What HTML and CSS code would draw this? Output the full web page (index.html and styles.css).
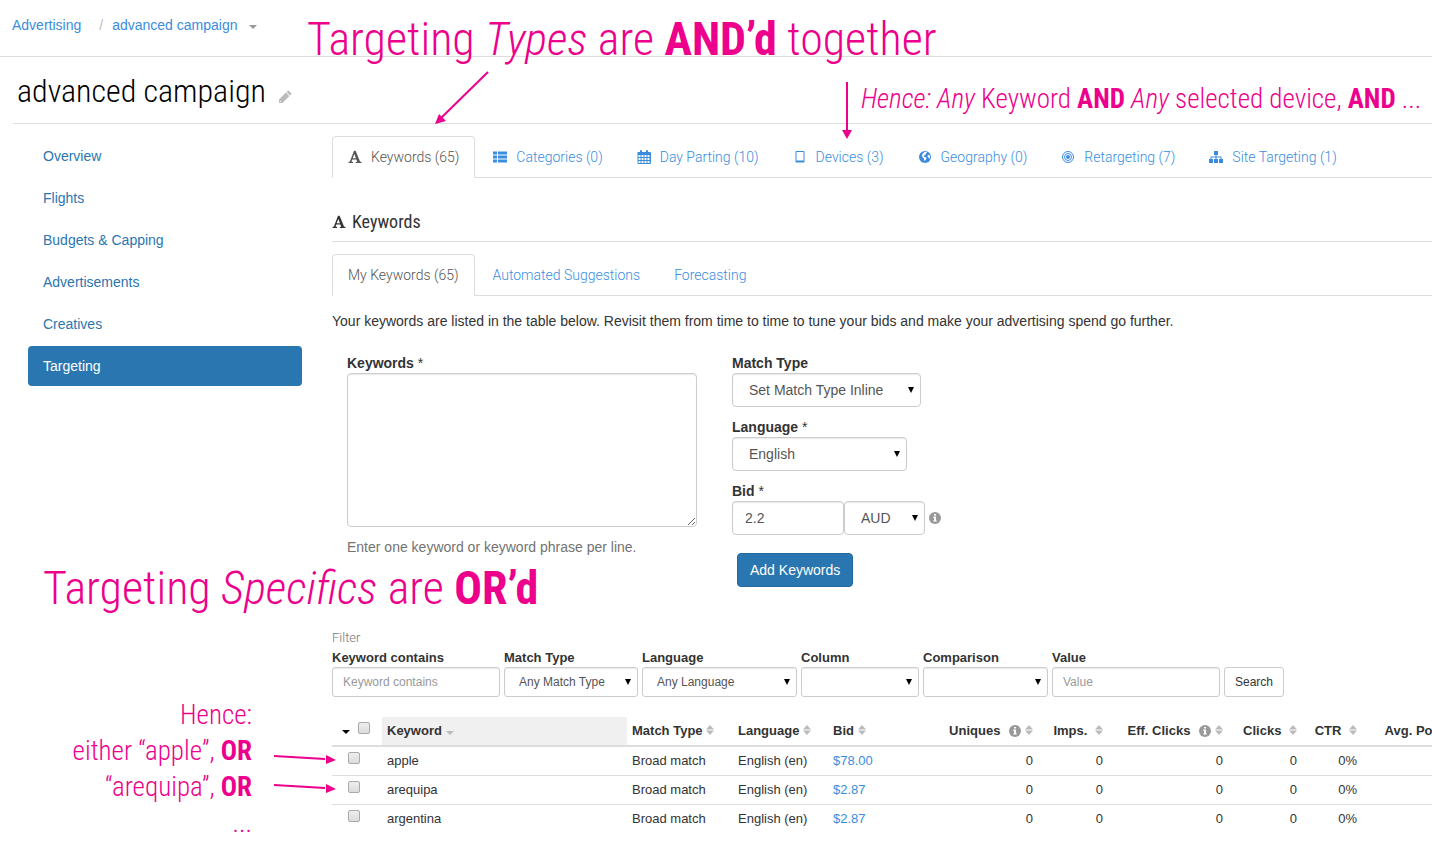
FILE: index.html
```html
<!DOCTYPE html>
<html lang="en">
<head>
  <meta charset="UTF-8">
  <meta name="viewport" content="width=device-width, initial-scale=1.0">
  <title>advanced campaign</title>
  <link rel="stylesheet" href="styles.css">
</head>
<body>
  <!-- shared icons -->
  <svg class="sprite" width="0" height="0" aria-hidden="true">
    <symbol id="icon-font" viewBox="0 0 14 14">
      <path d="M6 .8h1.600L12 11.600l1.500.5v.9H7.800v-.9l1.400-.4-.8-2.300H4.300l-.8 2.200 1.600.5v.9H.5v-.9l1.400-.5zM6.300 4L4.700 8.300H8z"/>
    </symbol>
    <symbol id="icon-list" viewBox="0 0 14 14">
      <path d="M0 1.500h4v3H0zM5 1.500h9v3H5zM0 5.500h4v3H0zM5 5.500h9v3H5zM0 9.500h4v3H0zM5 9.500h9v3H5z"/>
    </symbol>
    <symbol id="icon-calendar" viewBox="0 0 14 14">
      <path fill-rule="evenodd" d="M1 2h2V1q0-1 1-1t1 1v1h4V1q0-1 1-1t1 1v1h2q1 0 1 1v10q0 1-1 1H1.500q-1 0-1-1V3q0-1 .5-1zM1.500 5v2h2V5zM4.500 5v2h2V5zM7.500 5v2h2V5zM10.500 5v2h2V5zM1.500 8v2h2V8zM4.500 8v2h2V8zM7.500 8v2h2V8zM10.500 8v2h2V8zM1.500 11v2h2v-2zM4.500 11v2h2v-2zM7.500 11v2h2v-2zM10.500 11v2h2v-2z"/>
    </symbol>
    <symbol id="icon-tablet" viewBox="0 0 14 14">
      <path fill-rule="evenodd" d="M3.500 1h7q1 0 1 1v9.500q0 1-1 1h-7q-1 0-1-1V2q0-1 1-1zM3.500 2v8.500h7V2z"/>
    </symbol>
    <symbol id="icon-globe" viewBox="0 0 14 14">
      <circle cx="7" cy="7" r="6"/>
      <path fill="#fff" d="M6.500 2l1.800-.2.8.9-1.400.8.2 1-1.500.7-.9 1.200 1.500.5 1.600 1-.5 1.400-1.200 1.400-.7-.3-.3-2-1.400-1.200-.6-1.700.5-1.500zM9.800 5.200l1.600-.4.7 1.500-.2 2-.8.5-.6-1.400-1-.6z"/>
    </symbol>
    <symbol id="icon-target" viewBox="0 0 14 14">
      <g fill="none" stroke="currentColor"><circle cx="7" cy="7" r="5.500"/><circle cx="7" cy="7" r="3.500"/></g>
      <circle cx="7" cy="7" r="2"/>
    </symbol>
    <symbol id="icon-sitemap" viewBox="0 0 14 14">
      <path d="M5 1h4v4H7.500v1.500H12q.5 0 .5.500v2H14v4h-4V9h1.500V7.500h-4V9H9v4H5V9h1.500V7.500h-4V9H4v4H0V9h1.500V7q0-.5.500-.5h4.500V5H5z"/>
    </symbol>
    <symbol id="icon-pencil" viewBox="0 0 14 14">
      <path fill-rule="evenodd" d="M1 9.500l6.900-6.900 3.500 3.500L4.500 13H1zM1.900 10.600v1.500h1.500zM8.600 1.900l1-1q.7-.6 1.400 0l2.100 2.100q.6.700 0 1.400l-1 1z"/>
    </symbol>
    <symbol id="icon-info" viewBox="0 0 12 12">
      <circle cx="6" cy="6" r="6"/>
      <path fill="#fff" d="M5 2h2v1.600H5zM4.200 4.600H7v3.800h.8v1.200H4.200V8.400H5V5.800h-.8z"/>
    </symbol>
    <symbol id="icon-sort" viewBox="0 0 8 10">
      <path d="M0 4.400L4 0l4 4.400zM0 5.600h8L4 10z"/>
    </symbol>
  </svg>

  <header class="topbar">
    <nav class="breadcrumb">
      <a href="#">Advertising</a>
      <span class="separator">/</span>
      <a href="#">advanced campaign</a>
      <span class="caret"></span>
    </nav>
  </header>

  <div class="title-row">
    <h1>advanced campaign</h1>
    <svg class="icon icon-edit"><use href="#icon-pencil"/></svg>
  </div>

  <div class="layout">
    <nav class="sidebar">
      <a href="#">Overview</a>
      <a href="#">Flights</a>
      <a href="#">Budgets &amp; Capping</a>
      <a href="#">Advertisements</a>
      <a href="#">Creatives</a>
      <a href="#" class="active">Targeting</a>
    </nav>

    <main class="content">
      <nav class="tabs">
        <a href="#" class="active"><svg class="icon"><use href="#icon-font"/></svg>Keywords (65)</a>
        <a href="#"><svg class="icon"><use href="#icon-list"/></svg>Categories (0)</a>
        <a href="#"><svg class="icon"><use href="#icon-calendar"/></svg>Day Parting (10)</a>
        <a href="#"><svg class="icon"><use href="#icon-tablet"/></svg>Devices (3)</a>
        <a href="#"><svg class="icon"><use href="#icon-globe"/></svg>Geography (0)</a>
        <a href="#"><svg class="icon"><use href="#icon-target"/></svg>Retargeting (7)</a>
        <a href="#"><svg class="icon"><use href="#icon-sitemap"/></svg>Site Targeting (1)</a>
      </nav>

      <h2><svg class="icon"><use href="#icon-font"/></svg>Keywords</h2>

      <nav class="tabs">
        <a href="#" class="active">My Keywords (65)</a>
        <a href="#">Automated Suggestions</a>
        <a href="#">Forecasting</a>
      </nav>

      <p class="intro">Your keywords are listed in the table below. Revisit them from time to time to tune your bids and make your advertising spend go further.</p>

      <form class="keyword-form">
        <div class="form-left">
          <label for="keywords">Keywords <span class="required">*</span></label>
          <textarea id="keywords"></textarea>
          <p class="help">Enter one keyword or keyword phrase per line.</p>
        </div>
        <div class="form-right">
          <div class="field">
            <label for="match-type">Match Type</label>
            <span class="select w-match"><select id="match-type"><option>Set Match Type Inline</option></select></span>
          </div>
          <div class="field">
            <label for="language">Language <span class="required">*</span></label>
            <span class="select w-language"><select id="language"><option>English</option></select></span>
          </div>
          <div class="field">
            <label for="bid">Bid <span class="required">*</span></label>
            <div class="bid-row">
              <input type="text" id="bid" value="2.2">
              <span class="select w-currency"><select id="currency" aria-label="Currency"><option>AUD</option></select></span>
              <svg class="info"><use href="#icon-info"/></svg>
            </div>
          </div>
          <button type="button" class="btn-primary">Add Keywords</button>
        </div>
      </form>

      <form class="filter">
        <p class="filter-title">Filter</p>
        <div class="filter-row">
          <div>
            <label for="f-keyword">Keyword contains</label>
            <input type="text" id="f-keyword" placeholder="Keyword contains">
          </div>
          <div>
            <label for="f-match">Match Type</label>
            <span class="select w-f-match"><select id="f-match"><option>Any Match Type</option></select></span>
          </div>
          <div>
            <label for="f-language">Language</label>
            <span class="select w-f-language"><select id="f-language"><option>Any Language</option></select></span>
          </div>
          <div>
            <label for="f-column">Column</label>
            <span class="select w-f-column"><select id="f-column"><option></option></select></span>
          </div>
          <div>
            <label for="f-comparison">Comparison</label>
            <span class="select w-f-comparison"><select id="f-comparison"><option></option></select></span>
          </div>
          <div>
            <label for="f-value">Value</label>
            <input type="text" id="f-value" placeholder="Value">
          </div>
          <button type="button" class="btn-search">Search</button>
        </div>
      </form>

      <div class="table-wrap">
        <table>
          <colgroup>
            <col class="c-check"><col class="c-keyword"><col class="c-match"><col class="c-language"><col class="c-bid">
            <col class="c-uniques"><col class="c-imps"><col class="c-eff"><col class="c-clicks"><col class="c-ctr"><col class="c-pos">
          </colgroup>
          <thead>
            <tr>
              <th class="check"><span class="caret"></span><input type="checkbox" aria-label="Select all"></th>
              <th class="sorted">Keyword <span class="caret"></span></th>
              <th>Match Type <svg class="sort"><use href="#icon-sort"/></svg></th>
              <th>Language <svg class="sort"><use href="#icon-sort"/></svg></th>
              <th>Bid <svg class="sort"><use href="#icon-sort"/></svg></th>
              <th class="num">Uniques <svg class="info"><use href="#icon-info"/></svg><svg class="sort"><use href="#icon-sort"/></svg></th>
              <th class="num"><span class="name">Imps.</span> <svg class="sort"><use href="#icon-sort"/></svg></th>
              <th class="num">Eff. Clicks <svg class="info"><use href="#icon-info"/></svg><svg class="sort"><use href="#icon-sort"/></svg></th>
              <th class="num"><span class="name">Clicks</span> <svg class="sort"><use href="#icon-sort"/></svg></th>
              <th class="num"><span class="name">CTR</span> <svg class="sort"><use href="#icon-sort"/></svg></th>
              <th class="num"><span class="name">Avg. Pos.</span> <svg class="sort"><use href="#icon-sort"/></svg></th>
            </tr>
          </thead>
          <tbody>
            <tr>
              <td class="check"><input type="checkbox" aria-label="apple"></td>
              <td>apple</td><td>Broad match</td><td>English (en)</td><td><a href="#">$78.00</a></td>
              <td class="num">0</td><td class="num">0</td><td class="num">0</td><td class="num">0</td><td class="num">0%</td><td></td>
            </tr>
            <tr>
              <td class="check"><input type="checkbox" aria-label="arequipa"></td>
              <td>arequipa</td><td>Broad match</td><td>English (en)</td><td><a href="#">$2.87</a></td>
              <td class="num">0</td><td class="num">0</td><td class="num">0</td><td class="num">0</td><td class="num">0%</td><td></td>
            </tr>
            <tr>
              <td class="check"><input type="checkbox" aria-label="argentina"></td>
              <td>argentina</td><td>Broad match</td><td>English (en)</td><td><a href="#">$2.87</a></td>
              <td class="num">0</td><td class="num">0</td><td class="num">0</td><td class="num">0</td><td class="num">0%</td><td></td>
            </tr>
          </tbody>
        </table>
      </div>
    </main>
  </div>

  <!-- notes drawn over the page -->
  <p class="note note-types">Targeting <i>Types</i> are <b>AND’d</b> together</p>
  <p class="note note-hence"><i>Hence: Any</i> Keyword <b>AND</b> <i>Any</i> selected device, <b>AND</b> ...</p>
  <p class="note note-specifics">Targeting <i>Specifics</i> are <b>OR’d</b></p>
  <p class="note note-either">Hence:<br>either “apple”, <b>OR</b><br>“arequipa”, <b>OR</b><br>...</p>
  <svg class="arrows" width="860" height="800" aria-hidden="true">
    <g stroke="#ec008c" stroke-width="2">
      <path d="M488 72L441 118"/>
      <path d="M847 82V131"/>
      <path d="M274 756L325 759"/>
      <path d="M274 785L325 788"/>
    </g>
    <g fill="#ec008c">
      <path d="M435 124l4-10 7 7z"/>
      <path d="M842 130h10l-5 9z"/>
      <path d="M336 760l-10 4V755z"/>
      <path d="M336 789l-10 4V784z"/>
    </g>
  </svg>
</body>
</html>
```

FILE: styles.css
```css
* {
  box-sizing: border-box;
}

body {
  margin: 0;
  position: relative;
  min-height: 100vh;
  overflow-x: hidden;
  background: #fff;
  color: #333;
  font-family: "Liberation Sans", Arial, sans-serif;
  font-size: 14px;
  line-height: 20px;
}

h1, h2, p {
  margin: 0;
}

a {
  color: #3a8dde;
  text-decoration: none;
}

.sprite {
  display: block;
}

.icon {
  width: 14px;
  height: 14px;
  fill: currentColor;
}

.caret {
  display: inline-block;
  border: 4px solid transparent;
  border-top-color: currentColor;
  border-bottom: 0;
}

/* header */
.topbar {
  height: 57px;
  padding: 15px 12px;
  border-bottom: 1px solid #ddd;
}

.breadcrumb {
  display: flex;
  align-items: center;
}

.breadcrumb .separator {
  padding: 0 9px 0 18px;
  color: #bbb;
}

.breadcrumb .caret {
  margin: 3px 0 0 12px;
  color: #999;
}

.title-row {
  display: flex;
  align-items: center;
  gap: 12px;
  height: 67px;
  margin-left: 13px;
  padding: 2px 4px 0;
  border-bottom: 1px solid #ddd;
}

h1 {
  color: #000;
  font: 300 32px/40px "Roboto Condensed", Roboto, sans-serif;
}

.icon-edit {
  margin-top: 12px;
  color: #bbb;
}

/* columns */
.layout {
  display: grid;
  grid-template-columns: 274px minmax(0, 1fr);
  gap: 30px;
  padding: 12px 0 0 28px;
}

.sidebar {
  display: flex;
  flex-direction: column;
  gap: 2px;
}

.sidebar a {
  padding: 10px 15px;
  border-radius: 4px;
  color: #2a76b0;
}

.sidebar .active {
  background: #2a76b0;
  color: #fff;
}

/* tabs */
.tabs {
  display: flex;
  gap: 2px;
  height: 42px;
  border-bottom: 1px solid #ddd;
  font-family: Roboto, sans-serif;
  font-weight: 300;
  white-space: nowrap;
}

.tabs a {
  display: flex;
  align-items: center;
  gap: 9px;
  height: 42px;
  padding: 0 15px;
  border: 1px solid transparent;
  border-radius: 4px 4px 0 0;
}

.tabs .active {
  border-color: #ddd;
  border-bottom-color: #fff;
  background: #fff;
  color: #555;
}

h2 {
  display: flex;
  align-items: center;
  gap: 6px;
  margin: 32px 0 12px;
  padding-bottom: 7px;
  border-bottom: 1px solid #ddd;
  font: 400 18px/24px "Roboto Condensed", Roboto, sans-serif;
}

.intro {
  margin-top: 15px;
}

/* forms */
label {
  display: block;
  font-weight: bold;
}

.required {
  font-weight: normal;
}

input[type="text"],
textarea,
select {
  display: block;
  width: 100%;
  height: 34px;
  margin: 0;
  padding: 6px 12px;
  border: 1px solid #ccc;
  border-radius: 4px;
  background: #fff;
  box-shadow: inset 0 1px 1px rgba(0, 0, 0, .08);
  color: #555;
  font: inherit;
}

::placeholder {
  color: #999;
  opacity: 1;
}

select {
  padding: 0 16px;
  appearance: none;
}

.select {
  position: relative;
  display: block;
}

.select::after {
  content: "";
  position: absolute;
  top: 50%;
  right: 7px;
  margin-top: -3px;
  border: 3px solid transparent;
  border-top: 6px solid #000;
  border-bottom: 0;
  pointer-events: none;
}

.keyword-form {
  display: flex;
  gap: 35px;
  margin: 22px 15px 0;
}

.form-left {
  width: 350px;
}

.keyword-form textarea {
  height: 154px;
}

.help {
  margin-top: 10px;
  color: #737373;
}

.field {
  margin-bottom: 10px;
}

.w-match { width: 189px; }
.w-language { width: 175px; }
.w-currency { width: 81px; }

.bid-row {
  display: flex;
  align-items: center;
}

.bid-row input[type="text"] {
  width: 112px;
}

.info {
  width: 12px;
  height: 12px;
  fill: #999;
}

.bid-row .info {
  margin-left: 4px;
}

button {
  border-radius: 4px;
  font: inherit;
}

.btn-primary {
  height: 34px;
  margin: 8px 0 0 5px;
  padding: 0 12px;
  border: 1px solid #2268a0;
  background: #2a76b0;
  color: #fff;
}

/* filter */
.filter {
  margin-top: 41px;
  font-size: 13px;
}

.filter-title {
  color: #777;
  font-family: Roboto, sans-serif;
  font-weight: 300;
}

.filter label {
  line-height: 19px;
}

.filter-row {
  display: flex;
  align-items: flex-end;
  gap: 4px;
}

.filter input[type="text"],
.filter select {
  height: 30px;
  border-radius: 3px;
  font-size: 12px;
}

.filter input[type="text"] {
  width: 168px;
  padding: 5px 10px;
}

.filter select {
  padding: 0 14px;
}

.w-f-match { width: 134px; }
.w-f-language { width: 155px; }
.w-f-column { width: 118px; }
.w-f-comparison { width: 125px; }

.btn-search {
  height: 30px;
  padding: 0 10px;
  border: 1px solid #ccc;
  border-radius: 3px;
  background: #fff;
  color: #333;
  font-size: 12px;
}

/* keyword table */
.table-wrap {
  margin-top: 20px;
  overflow: hidden;
}

table {
  width: 1132px;
  table-layout: fixed;
  border-collapse: collapse;
  font-size: 13px;
  line-height: 18px;
}

.c-check { width: 50px; }
.c-keyword { width: 245px; }
.c-match { width: 106px; }
.c-language { width: 95px; }
.c-bid { width: 90px; }
.c-uniques { width: 120px; }
.c-imps { width: 70px; }
.c-eff { width: 120px; }
.c-clicks { width: 74px; }
.c-ctr { width: 60px; }
.c-pos { width: 102px; }

th, td {
  padding: 5px;
  text-align: left;
  white-space: nowrap;
}

th {
  border-bottom: 2px solid #ddd;
}

td {
  border-top: 1px solid #ddd;
}

.num {
  text-align: right;
}

.name {
  margin-right: 4px;
}

.sorted {
  background: #f0f0f0;
}

.sorted .caret {
  color: #bbb;
}

.sort {
  width: 8px;
  height: 10px;
  fill: #bbb;
}

th .info {
  margin: 0 4px 0 5px;
  vertical-align: -2px;
}

.check {
  padding: 0 12px 0 10px;
  text-align: right;
}

td.check {
  padding: 0;
  text-align: center;
}

.check .caret {
  margin-right: 8px;
  vertical-align: 1px;
  color: #000;
}

input[type="checkbox"] {
  appearance: none;
  width: 12px;
  height: 12px;
  margin: 0 6px 0 0;
  border: 1px solid #aaa;
  border-radius: 2px;
  background: linear-gradient(#eee, #dcdcdc);
  vertical-align: 1px;
}

th input[type="checkbox"] {
  margin-right: 0;
}

/* notes */
.note {
  position: absolute;
  color: #ec008c;
  font-family: "Roboto Condensed", Roboto, sans-serif;
  font-weight: 300;
  font-size: 27px;
  line-height: 36px;
  white-space: nowrap;
}

.note b {
  font-weight: 700;
}

.note-types,
.note-specifics {
  font-size: 46px;
  line-height: 56px;
}

.note-types {
  top: 11px;
  left: 307px;
}

.note-hence {
  top: 81px;
  left: 861px;
}

.note-specifics {
  top: 560px;
  left: 43px;
}

.note-either {
  top: 697px;
  left: 72px;
  width: 180px;
  text-align: right;
}

.arrows {
  position: absolute;
  top: 0;
  left: 0;
  pointer-events: none;
}
```
